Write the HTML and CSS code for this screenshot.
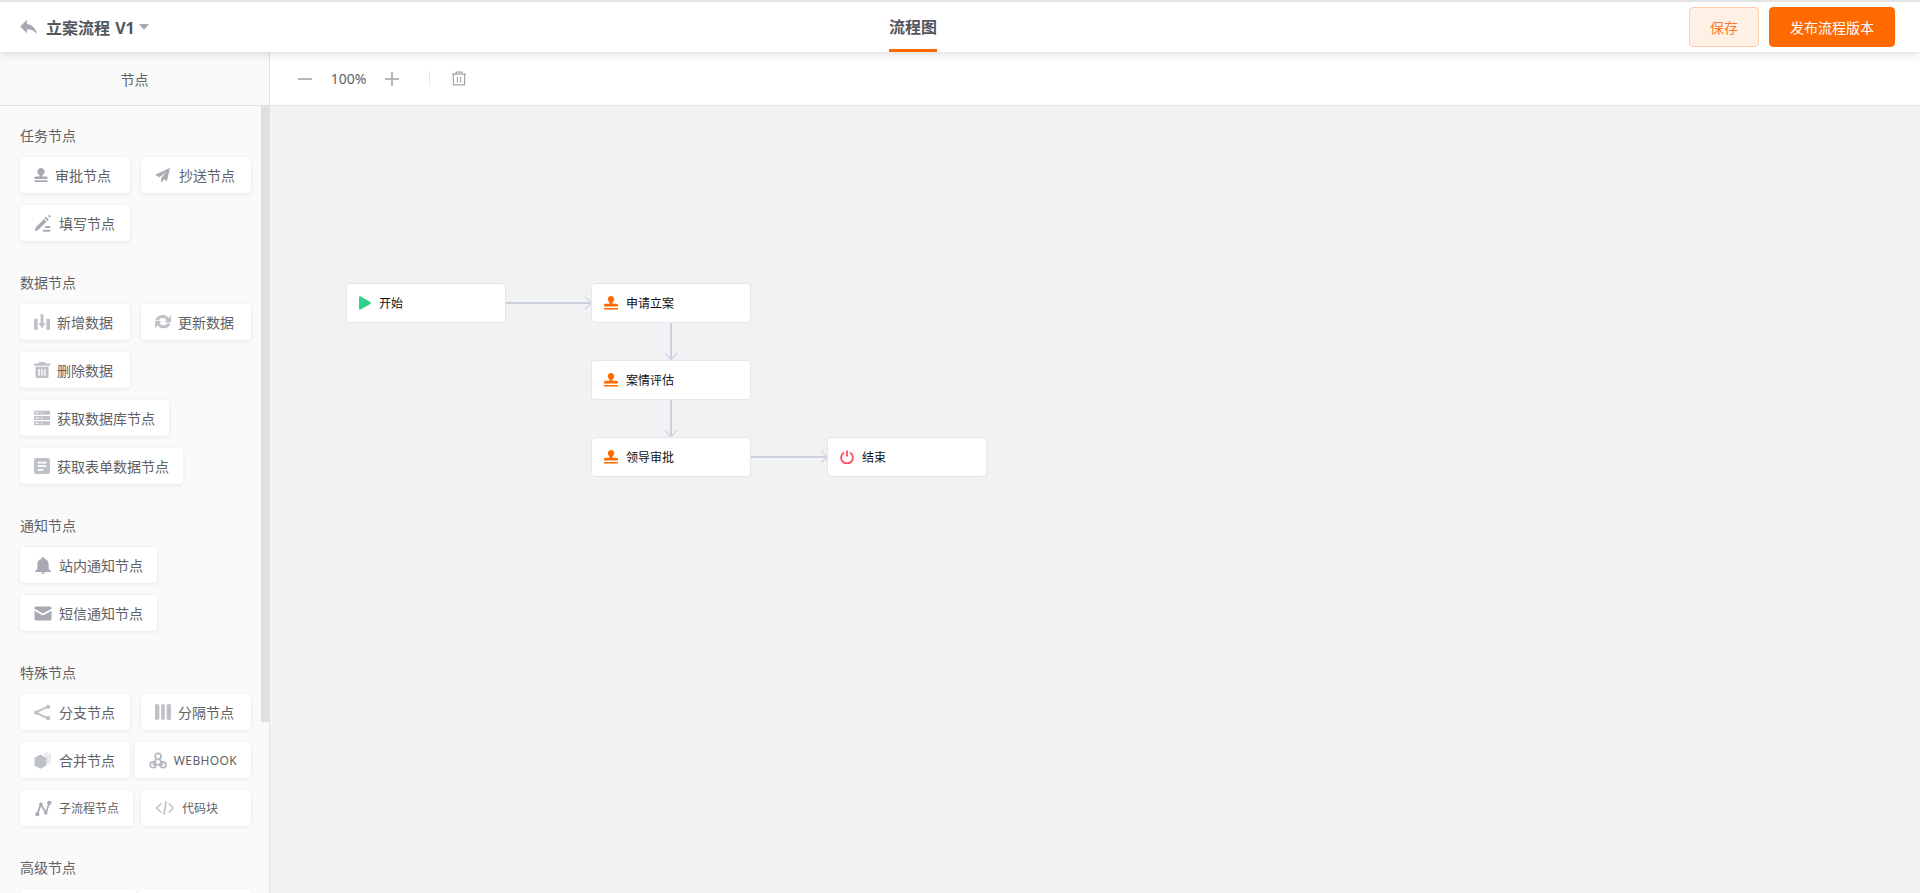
FILE: index.html
```html
<!DOCTYPE html>
<html lang="zh-CN">
<head>
	<meta charset="utf-8">
	<meta name="viewport" content="width=device-width, initial-scale=1">
	<title>立案流程 V1</title>
	<link rel="stylesheet" href="styles.css">
</head>
<body>
	<header class="topbar">
		<div class="topbar-left">
			<svg class="back-icon" viewBox="1 2 22 18"><path d="M10 7V2L1 10.500 10 19v-5.200c5.800 0 9.900 1.900 13 6.200-1.200-6.300-5-11.900-13-13z"/></svg>
			<span class="flow-name">立案流程 V1</span>
			<span class="caret"></span>
		</div>
		<div class="tab">流程图</div>
		<div class="topbar-right">
			<button class="btn-save">保存</button>
			<button class="btn-publish">发布流程版本</button>
		</div>
	</header>

	<div class="workspace">
		<aside class="sidebar">
			<div class="sidebar-head">节点</div>
			<div class="sidebar-list">

				<div class="group">
					<div class="group-title">任务节点</div>
					<div class="group-items">
						<div class="item"><svg class="ic ic-14" viewBox="2 1 20 21.500"><path d="M12 1a5.500 5.500 0 0 0-3.200 10c.7.6 1.200 1.300 1.200 2.200V14H3.500A1.500 1.500 0 0 0 2 15.500V18h20v-2.500a1.500 1.500 0 0 0-1.500-1.500H14v-.8c0-.9.5-1.600 1.200-2.200A5.500 5.500 0 0 0 12 1zM2 20h20v2.500H2z"/></svg>审批节点</div>
						<div class="item"><svg class="ic ic-17" viewBox="1 1 22 22" preserveAspectRatio="xMinYMid"><path d="M23 1 1 11l6.500 3.500L18 6l-8 10v7l4.500-5.500 4 2.500z"/></svg>抄送节点</div>
						<div class="item"><svg class="ic ic-18" viewBox="1 0 23 23" preserveAspectRatio="xMinYMid"><path d="M14.500 5.500 18 9 7 20l-5 2L3.500 16.500zM17 2l4 4-2 2-3.500-3.500zM13 20h10v2.500H13zM16 15h7v2.500h-7zM20.500 0.500h3v2.500h-3z"/></svg>填写节点</div>
					</div>
				</div>

				<div class="group">
					<div class="group-title">数据节点</div>
					<div class="group-items">
						<div class="item"><svg class="ic ic-16 light" viewBox="1 2 22 21"><path d="M1 8h5v15H1zM18 8h5v15h-5zM10 2h4v12h3l-5 7-5-7h3z"/></svg>新增数据</div>
						<div class="item"><svg class="ic ic-16 light" viewBox="1 2 22 21"><path d="M12 3c3.200 0 6 1.500 7.700 3.900L23 3v10h-9l3-3a6.500 6.500 0 0 0-11.400.5L1.500 9.700A11 11 0 0 1 12 3zM1 11h9l-3 3a6.500 6.500 0 0 0 11.400-.5l4.100 1.800A11 11 0 0 1 4.300 17.100L1 21z"/></svg>更新数据</div>
						<div class="item"><svg class="ic ic-16 light" viewBox="1 1 22 22"><path d="M8 1h8l1 2h6v3H1V3h6zM3 7.500h18V21a2 2 0 0 1-2 2H5a2 2 0 0 1-2-2zm4 3V20h2v-9.500zm4 0V20h2v-9.500zm4 0V20h2v-9.500z" fill-rule="evenodd"/></svg>删除数据</div>
						<div class="item"><svg class="ic ic-16 light" viewBox="1 2 23 20.500"><path d="M1 2h23v5.500H1zM1 9.500h23V15H1zM1 17h23v5.500H1z"/><path d="M3 4h5v1.500H3zM3 11.500h5V13H3zM3 19h5v1.500H3zM11 4h2v1.500h-2zM11 11.500h2V13h-2zM11 19h2v1.500h-2z" fill="#fff"/></svg>获取数据库节点</div>
						<div class="item"><svg class="ic ic-16 light" viewBox="1 1 22 22"><path d="M4 1h16a3 3 0 0 1 3 3v16a3 3 0 0 1-3 3H4a3 3 0 0 1-3-3V4a3 3 0 0 1 3-3zm2 5v2.500h12V6zm0 5v2.500h12V11zm0 5v2.500h8V16z" fill-rule="evenodd"/></svg>获取表单数据节点</div>
					</div>
				</div>

				<div class="group">
					<div class="group-title">通知节点</div>
					<div class="group-items">
						<div class="item"><svg class="ic ic-18" viewBox="1 0 22 24"><path d="M12 0a2 2 0 0 1 2 2v.5c3.500 1 6 4.200 6 8V17l3 2.500V21H1v-1.500L4 17v-6.500c0-3.800 2.500-7 6-8V2a2 2 0 0 1 2-2zM9 22h6a3 2 0 0 1-6 0z"/></svg>站内通知节点</div>
						<div class="item"><svg class="ic ic-18" viewBox="1 1 22 22"><path d="M3 3h18a2 2 0 0 1 2 2v1l-11 6L1 6V5a2 2 0 0 1 2-2zM1 8.500l11 6 11-6V19a2 2 0 0 1-2 2H3a2 2 0 0 1-2-2z"/></svg>短信通知节点</div>
					</div>
				</div>

				<div class="group">
					<div class="group-title">特殊节点</div>
					<div class="group-items">
						<div class="item"><svg class="ic ic-18 light" viewBox="0 0 24 24" preserveAspectRatio="xMinYMid"><path d="M21 3 2 12l19 9" stroke="#bfc1c8" stroke-width="3" fill="none"/><circle cx="3" cy="12" r="3"/><circle cx="20" cy="4" r="3"/><circle cx="20" cy="20" r="3"/></svg>分支节点</div>
						<div class="item"><svg class="ic ic-16 light" viewBox="1 1 22 22"><rect x="1" y="1" width="6" height="22" rx="2.500"/><rect x="9.500" y="1" width="5" height="22" rx="2.500"/><rect x="17" y="1" width="6" height="22" rx="2.500"/></svg>分隔节点</div>
						<div class="item"><svg class="ic ic-18 light" viewBox="0 0 24 24"><path d="M8.500 3.500 17 8v11l-8.500 4.500L0 19V8z"/><path d="M13 2.500 19 6v11.500M16 .5l6 3.500v10.500" stroke="#bfc1c8" stroke-width="1" fill="none"/></svg>合并节点</div>
						<div class="item item-small item-hook"><svg class="ic ic-18 light" viewBox="0 0 24 24"><g fill="none" stroke="#b4b7bf" stroke-width="2.400"><circle cx="12" cy="6" r="4.200"/><circle cx="5" cy="18" r="4.200"/><circle cx="19" cy="18" r="4.200"/><path d="M10 9.500 5 18M14 9.500 19 18M5 18h14"/></g></svg>WEBHOOK</div>
						<div class="item item-small"><svg class="ic ic-18" viewBox="0 0 24 24"><path d="M4 20 9 6l7 12 5-14" stroke="#a7aab2" stroke-width="2.500" fill="none"/><circle cx="4" cy="20" r="3"/><circle cx="9" cy="6" r="2.500"/><circle cx="16" cy="18" r="2.500"/><circle cx="21" cy="4" r="3"/></svg>子流程节点</div>
						<div class="item item-small item-wide"><svg class="ic ic-20 light" viewBox="0 0 24 24"><path d="M7 6l-6 6 6 6M17 6l6 6-6 6M13.500 3l-3 18" stroke="#bfc1c8" stroke-width="2.200" fill="none"/></svg>代码块</div>
					</div>
				</div>

				<div class="group">
					<div class="group-title">高级节点</div>
					<div class="group-items">
						<div class="item item-last-a"></div>
						<div class="item item-last-b"></div>
					</div>
				</div>

			</div>
			<div class="scroll-thumb"></div>
		</aside>

		<main class="main">
			<div class="toolbar">
				<svg class="tool-icon" viewBox="0 0 14 14"><path d="M0 6.200h14v1.600H0z"/></svg>
				<span class="zoom-value">100%</span>
				<svg class="tool-icon" viewBox="0 0 14 14"><path d="M6.200 0h1.600v6.200H14v1.600H7.800V14H6.200V7.800H0V6.200h6.200z"/></svg>
				<span class="tool-sep"></span>
				<svg class="trash-icon" viewBox="0 0 14 14"><path d="M0 2.700h14M4 2.700V.6h6v2.100M1.400 2.700v10.700h11.200V2.700M5.400 5.500v5.500M8.600 5.500v5.500" stroke="#a4a7ae" stroke-width="1.200" fill="none"/></svg>
			</div>

			<div class="canvas">
				<svg class="edges" width="1650" height="787" fill="none">
					<g stroke="#cdcfdd" stroke-width="2">
						<path d="M236 197h86"/>
						<path d="M401 217v37"/>
						<path d="M401 294v37"/>
						<path d="M481 351h77"/>
					</g>
					<g stroke="#d6d8e3" stroke-width="1.500">
						<path d="M315 191l7 6-7 6"/>
						<path d="M395 247l6 7 6-7"/>
						<path d="M395 324l6 7 6-7"/>
						<path d="M551 345l7 6-7 6"/>
					</g>
				</svg>

				<div class="node node-start">
					<svg class="node-icon" viewBox="0 0 12 14"><path d="M0 1.500C0 .5 1 0 1.800.4l9.500 5.500c.8.500.8 1.700 0 2.200L1.800 13.600C1 14 0 13.500 0 12.500z" fill="#2fd08a"/></svg>
					<span>开始</span>
				</div>
				<div class="node node-apply">
					<svg class="node-icon" viewBox="0 0 14 14"><path class="stamp" d="M7 0a3.300 3.300 0 0 0-2 5.900c.4.400.6.800.6 1.300v.6H1.500A1.500 1.500 0 0 0 0 9.300v1.200h14V9.300a1.500 1.500 0 0 0-1.500-1.500H8.400v-.6c0-.5.200-.9.600-1.300A3.300 3.300 0 0 0 7 0zM0 12h14v1.500H0z"/></svg>
					<span>申请立案</span>
				</div>
				<div class="node node-assess">
					<svg class="node-icon" viewBox="0 0 14 14"><path class="stamp" d="M7 0a3.300 3.300 0 0 0-2 5.900c.4.400.6.800.6 1.300v.6H1.500A1.500 1.500 0 0 0 0 9.300v1.200h14V9.300a1.500 1.500 0 0 0-1.500-1.500H8.400v-.6c0-.5.200-.9.600-1.300A3.300 3.300 0 0 0 7 0zM0 12h14v1.500H0z"/></svg>
					<span>案情评估</span>
				</div>
				<div class="node node-review">
					<svg class="node-icon" viewBox="0 0 14 14"><path class="stamp" d="M7 0a3.300 3.300 0 0 0-2 5.900c.4.400.6.800.6 1.300v.6H1.500A1.500 1.500 0 0 0 0 9.300v1.200h14V9.300a1.500 1.500 0 0 0-1.500-1.500H8.400v-.6c0-.5.200-.9.600-1.300A3.300 3.300 0 0 0 7 0zM0 12h14v1.500H0z"/></svg>
					<span>领导审批</span>
				</div>
				<div class="node node-end">
					<svg class="node-icon" viewBox="0 0 14 14"><path d="M4 2.500a5.900 5.900 0 1 0 6 0M7 .5v6" stroke="#ff4d63" stroke-width="1.800" fill="none"/></svg>
					<span>结束</span>
				</div>
			</div>
		</main>
	</div>
</body>
</html>
```

FILE: styles.css
```css
* {
	box-sizing: border-box;
}

body {
	margin: 0;
	height: 100vh;
	overflow: hidden;
	display: flex;
	flex-direction: column;
	font-family: "Noto Sans", "Noto Sans CJK SC", sans-serif;
	font-size: 14px;
	color: #606266;
	background-color: #fff;
}

.topbar {
	height: 52px;
	flex: none;
	display: grid;
	grid-template-columns: 889px auto 1fr;
	align-items: stretch;
	background-color: #fff;
	border-top: 2px solid #e4e4e4;
	box-shadow: 0 2px 8px rgba(0, 0, 0, 0.14);
	position: relative;
	z-index: 2;
}

.topbar-left {
	display: flex;
	align-items: center;
	padding-left: 20px;
}

.back-icon {
	width: 17px;
	height: 14px;
	fill: #a7aab2;
	margin-right: 9px;
}

.flow-name {
	font-size: 16px;
	font-weight: 700;
	word-spacing: 1px;
	color: #53565c;
}

.caret {
	width: 0;
	height: 0;
	margin-left: 4px;
	border-left: 5px solid transparent;
	border-right: 5px solid transparent;
	border-top: 6px solid #a7aab2;
}

.tab {
	display: flex;
	align-items: center;
	font-size: 16px;
	font-weight: 700;
	color: #53565c;
	border-bottom: 3px solid #ff6a00;
}

.topbar-right {
	display: flex;
	justify-content: flex-end;
	align-items: flex-start;
	gap: 10px;
	padding-top: 5px;
	padding-right: 25px;
}

.topbar-right button {
	height: 40px;
	font-family: inherit;
	font-size: 14px;
	border-radius: 4px;
}

.btn-save {
	width: 70px;
	background-color: #fff0e6;
	border: 1px solid #ffc8a8;
	color: #ff7a2a;
}

.btn-publish {
	width: 126px;
	background-color: #ff6a00;
	border: 1px solid #ff6a00;
	color: #fff;
}

.workspace {
	flex: 1;
	display: flex;
	min-height: 0;
}

.sidebar {
	width: 270px;
	flex: none;
	display: flex;
	flex-direction: column;
	position: relative;
	background-color: #fafafa;
	border-right: 1px solid #e3e3e3;
}

.sidebar-head {
	height: 54px;
	flex: none;
	display: flex;
	align-items: center;
	justify-content: center;
	border-bottom: 1px solid #e3e3e3;
	color: #606266;
}

.sidebar-list {
	flex: 1;
	overflow: hidden;
	padding: 20px 0 0 20px;
	min-height: 0;
}

.scroll-thumb {
	position: absolute;
	left: 261px;
	top: 54px;
	width: 8px;
	height: 616px;
	background-color: #e0e0e0;
}

.group {
	width: 231px;
	padding-bottom: 20px;
}

.group-title {
	line-height: 20px;
	margin-bottom: 11px;
	color: #606266;
}

.group-items {
	display: flex;
	flex-wrap: wrap;
	justify-content: space-between;
}

.item {
	min-width: 110px;
	height: 36px;
	display: flex;
	align-items: center;
	gap: 7px;
	padding: 0 14px;
	margin-bottom: 12px;
	background-color: #fff;
	border-radius: 4px;
	box-shadow: 0 1px 4px rgba(0, 0, 0, 0.08);
	white-space: nowrap;
}

.item-small {
	font-size: 12px;
}

.item-hook {
	letter-spacing: 0.35px;
}

.item-wide {
	width: 110px;
}

.item-last-a {
	width: 116px;
}

.item-last-b {
	width: 113px;
}

.ic {
	flex: none;
	fill: #a7aab2;
}

.ic.light {
	fill: #bfc1c8;
}

.ic-14 {
	width: 14px;
	height: 14px;
}

.ic-16 {
	width: 16px;
	height: 16px;
}

.ic-17 {
	width: 17px;
	height: 15px;
}

.ic-18 {
	width: 18px;
	height: 17px;
}

.ic-20 {
	width: 20px;
	height: 18px;
}

.main {
	flex: 1;
	display: flex;
	flex-direction: column;
	min-width: 0;
}

.toolbar {
	height: 54px;
	flex: none;
	display: flex;
	align-items: center;
	padding-left: 28px;
	background-color: #fff;
	border-bottom: 1px solid #e0e2e6;
}

.tool-icon {
	width: 14px;
	height: 14px;
	fill: #a4a7ae;
}

.zoom-value {
	width: 73px;
	text-align: center;
	color: #606266;
}

.tool-sep {
	width: 1px;
	height: 15px;
	margin: 0 22px 0 30px;
	background-color: #e6e6e6;
}

.trash-icon {
	width: 14px;
	height: 15px;
}

.canvas {
	flex: 1;
	position: relative;
	background-color: #f1f2f4;
	overflow: hidden;
}

.edges {
	position: absolute;
	left: 0;
	top: 0;
}

.node {
	position: absolute;
	width: 160px;
	height: 40px;
	display: flex;
	align-items: center;
	gap: 8px;
	padding-left: 12px;
	font-size: 12px;
	color: #111;
	background-color: #fff;
	border: 1px solid #e4e6ea;
	border-radius: 4px;
}

.node-icon {
	height: 14px;
	flex: none;
}

.stamp {
	fill: #ff6a00;
}

.node-start {
	left: 76px;
	top: 177px;
}

.node-start .node-icon {
	width: 12px;
}

.node-apply {
	left: 321px;
	top: 177px;
}

.node-assess {
	left: 321px;
	top: 254px;
}

.node-review {
	left: 321px;
	top: 331px;
}

.node-end {
	left: 557px;
	top: 331px;
}
```
